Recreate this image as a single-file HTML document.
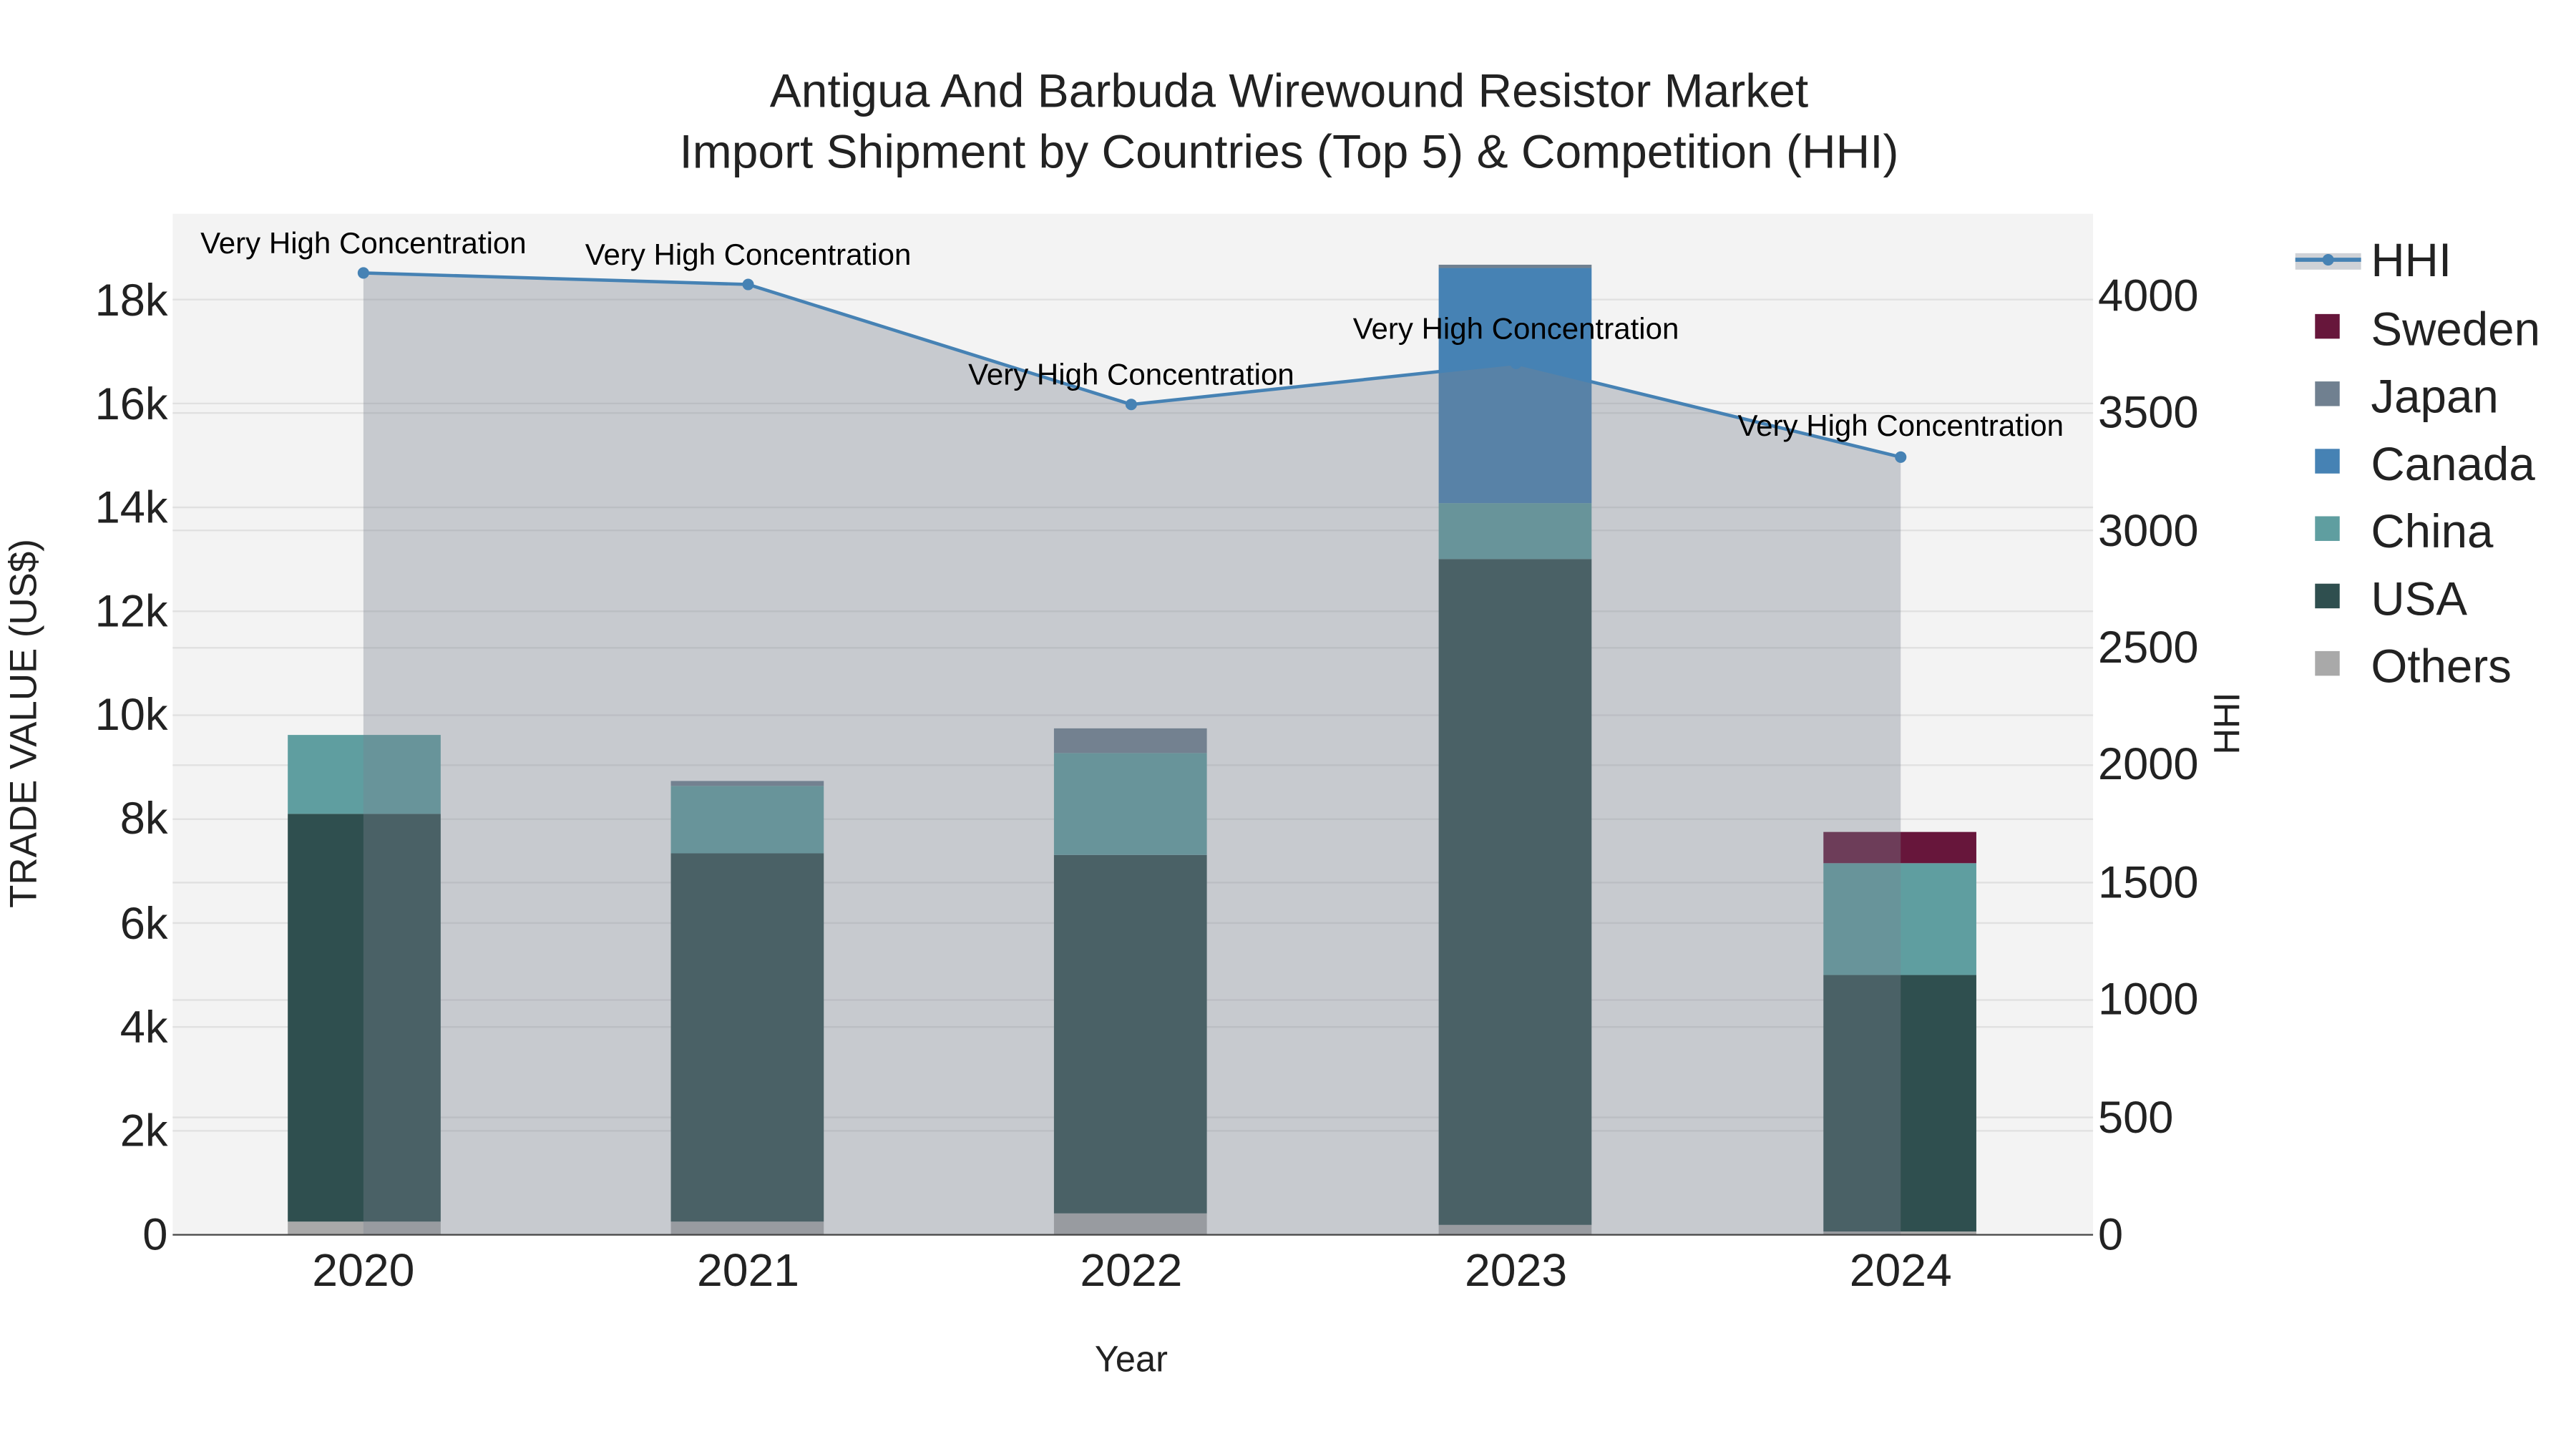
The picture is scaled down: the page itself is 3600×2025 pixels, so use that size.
<!DOCTYPE html>
<html><head><meta charset="utf-8"><style>html,body{margin:0;padding:0;background:#fff}svg{display:block}</style></head><body>
<svg width="3600" height="2025" viewBox="0 0 1566.7 881.3" xmlns="http://www.w3.org/2000/svg" font-family="Liberation Sans, sans-serif">
<rect width="1566.7" height="881.3" fill="#fff"/>
<rect x="105" y="130" width="1168" height="621" fill="#f3f3f3"/>
<g stroke="#e0e0e0" stroke-width="1">
<line x1="105" x2="1273" y1="687.8" y2="687.8"/><line x1="105" x2="1273" y1="624.6" y2="624.6"/><line x1="105" x2="1273" y1="561.4" y2="561.4"/><line x1="105" x2="1273" y1="498.2" y2="498.2"/><line x1="105" x2="1273" y1="435" y2="435"/><line x1="105" x2="1273" y1="371.8" y2="371.8"/><line x1="105" x2="1273" y1="308.6" y2="308.6"/><line x1="105" x2="1273" y1="245.4" y2="245.4"/><line x1="105" x2="1273" y1="182.2" y2="182.2"/>
<line x1="105" x2="1273" y1="679.6" y2="679.6"/><line x1="105" x2="1273" y1="608.2" y2="608.2"/><line x1="105" x2="1273" y1="536.8" y2="536.8"/><line x1="105" x2="1273" y1="465.4" y2="465.4"/><line x1="105" x2="1273" y1="394" y2="394"/><line x1="105" x2="1273" y1="322.6" y2="322.6"/><line x1="105" x2="1273" y1="251.2" y2="251.2"/>
</g>
<g>
<rect x="175" y="743" width="93" height="8" fill="#a9a9a9"/>
<rect x="175" y="495" width="93" height="248" fill="#2f4f4f"/>
<rect x="175" y="447" width="93" height="48" fill="#5f9ea0"/>
<rect x="408" y="743" width="93" height="8" fill="#a9a9a9"/>
<rect x="408" y="519" width="93" height="224" fill="#2f4f4f"/>
<rect x="408" y="478" width="93" height="41" fill="#5f9ea0"/>
<rect x="408" y="475" width="93" height="3" fill="#708090"/>
<rect x="641" y="738" width="93" height="13" fill="#a9a9a9"/>
<rect x="641" y="520" width="93" height="218" fill="#2f4f4f"/>
<rect x="641" y="458" width="93" height="62" fill="#5f9ea0"/>
<rect x="641" y="443" width="93" height="15" fill="#708090"/>
<rect x="875" y="745" width="93" height="6" fill="#a9a9a9"/>
<rect x="875" y="340" width="93" height="405" fill="#2f4f4f"/>
<rect x="875" y="306" width="93" height="34" fill="#5f9ea0"/>
<rect x="875" y="163" width="93" height="143" fill="#4682b4"/>
<rect x="875" y="161" width="93" height="2" fill="#708090"/>
<rect x="1109" y="749" width="93" height="2" fill="#a9a9a9"/>
<rect x="1109" y="593" width="93" height="156" fill="#2f4f4f"/>
<rect x="1109" y="525" width="93" height="68" fill="#5f9ea0"/>
<rect x="1109" y="506" width="93" height="19" fill="#67163b"/>
</g>
<polygon points="221,166 455,173 688,246 922,221 1156,278 1156,751 221,751" fill="rgb(123,129,143)" fill-opacity="0.36"/>
<polyline points="221,166 455,173 688,246 922,221 1156,278" fill="none" stroke="#4682b4" stroke-width="2"/>
<g fill="#4682b4"><circle cx="221" cy="166" r="3.5"/><circle cx="455" cy="173" r="3.5"/><circle cx="688" cy="246" r="3.5"/><circle cx="922" cy="221" r="3.5"/><circle cx="1156" cy="278" r="3.5"/></g>
<line x1="105" x2="1273" y1="751" y2="751" stroke="#444" stroke-width="1"/>
<g font-size="18.3" fill="#000" text-anchor="middle">
<text x="221" y="154">Very High Concentration</text>
<text x="455" y="161">Very High Concentration</text>
<text x="688" y="234">Very High Concentration</text>
<text x="922" y="206">Very High Concentration</text>
<text x="1156" y="265">Very High Concentration</text>
</g>
<g font-size="28.7" fill="#222" text-anchor="middle">
<text x="784" y="65">Antigua And Barbuda Wirewound Resistor Market</text>
<text x="784" y="102">Import Shipment by Countries (Top 5) &amp; Competition (HHI)</text>
</g>
<g font-size="27.5" fill="#222" text-anchor="end">
<text x="102" y="760">0</text><text x="102" y="697">2k</text><text x="102" y="634">4k</text><text x="102" y="571">6k</text><text x="102" y="507">8k</text><text x="102" y="444">10k</text><text x="102" y="381">12k</text><text x="102" y="318">14k</text><text x="102" y="255">16k</text><text x="102" y="192">18k</text>
</g>
<g font-size="27.5" fill="#222" text-anchor="start">
<text x="1276" y="760">0</text><text x="1276" y="689">500</text><text x="1276" y="617">1000</text><text x="1276" y="546">1500</text><text x="1276" y="474">2000</text><text x="1276" y="403">2500</text><text x="1276" y="332">3000</text><text x="1276" y="260">3500</text><text x="1276" y="189">4000</text>
</g>
<g font-size="28" fill="#222" text-anchor="middle">
<text x="221" y="782">2020</text><text x="455" y="782">2021</text><text x="688" y="782">2022</text><text x="922" y="782">2023</text><text x="1156" y="782">2024</text>
</g>
<text x="688" y="834" font-size="22" fill="#222" text-anchor="middle">Year</text>
<text transform="translate(22,440) rotate(-90)" font-size="23" fill="#222" text-anchor="middle">TRADE VALUE (US$)</text>
<text transform="translate(1362,440) rotate(-90)" font-size="22" fill="#222" text-anchor="middle">HHI</text>
<g font-size="28.5" fill="#222">
<rect x="1396" y="154" width="40" height="10" fill="rgb(123,129,143)" fill-opacity="0.36"/>
<line x1="1396" x2="1436" y1="158" y2="158" stroke="#4682b4" stroke-width="2.5"/><circle cx="1416" cy="158" r="3.5" fill="#4682b4"/>
<text x="1442" y="168">HHI</text>
<rect x="1408" y="191" width="15" height="15" fill="#67163b"/><text x="1442" y="210">Sweden</text>
<rect x="1408" y="232" width="15" height="15" fill="#708090"/><text x="1442" y="251">Japan</text>
<rect x="1408" y="273" width="15" height="15" fill="#4682b4"/><text x="1442" y="292">Canada</text>
<rect x="1408" y="314" width="15" height="15" fill="#5f9ea0"/><text x="1442" y="333">China</text>
<rect x="1408" y="355" width="15" height="15" fill="#2f4f4f"/><text x="1442" y="374">USA</text>
<rect x="1408" y="396" width="15" height="15" fill="#a9a9a9"/><text x="1442" y="415">Others</text>
</g>
</svg>
</body></html>
